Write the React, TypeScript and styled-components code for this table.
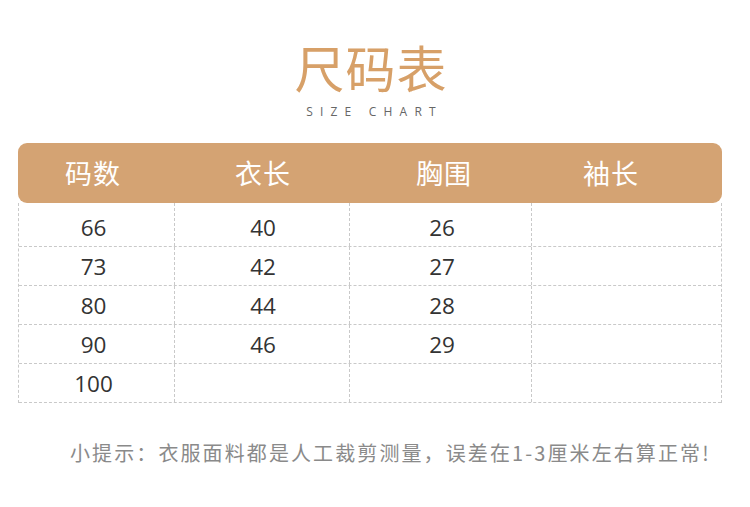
import React from "react";
import styled, { createGlobalStyle } from "styled-components";

const GlobalStyle = createGlobalStyle`
  html, body {
    margin: 0;
    padding: 0;
    background: #fff;
  }
  body {
    font-family: "Noto Sans CJK SC", "Noto Sans", sans-serif;
  }
`;

const Page = styled.div`
  width: 750px;
  height: 507px;
  background: #fff;
  display: flex;
  flex-direction: column;
  align-items: center;
  padding: 36px 8px 0 0;
  box-sizing: border-box;
`;

const Title = styled.div`
  font-family: "Noto Sans CJK SC", sans-serif;
  font-size: 50px;
  line-height: 60px;
  color: #d7a068;
  letter-spacing: 1px;
`;

const SubTitle = styled.div`
  font-family: "Open Sans", "Liberation Sans", sans-serif;
  font-size: 12px;
  letter-spacing: 7.2px;
  color: #666;
  margin-top: 7px;
  padding-left: 7px;
`;

const Table = styled.div`
  width: 704px;
  margin-top: 23px;
  align-self: flex-start;
  margin-left: 18px;
`;

const HeaderBar = styled.div`
  height: 60px;
  background: #d4a373;
  border-radius: 9px;
  display: grid;
  grid-template-columns: 150px 190px 172px 162px 1fr;
  align-items: center;
`;

const HeadCell = styled.div`
  text-align: center;
  color: #fff;
  font-size: 27px;
  letter-spacing: 1px;
  padding-bottom: 2px;
`;

const Body = styled.div`
  border-left: 1px dashed #c9c9c9;
  border-right: 1px dashed #c9c9c9;
`;

const Row = styled.div<{ $first?: boolean }>`
  display: grid;
  grid-template-columns: 156px 175px 182px 1fr;
  height: ${(p) => (p.$first ? 44 : 39)}px;
  border-bottom: 1px dashed #c9c9c9;
  box-sizing: border-box;
`;

const Cell = styled.div<{ $first?: boolean }>`
  display: flex;
  align-items: center;
  justify-content: center;
  padding-top: ${(p) => (p.$first ? 5 : 0)}px;
  border-right: 1px dashed #c9c9c9;
  font-family: "Open Sans", "Noto Sans", sans-serif;
  font-size: 22.5px;
  color: #333;
  &:last-child {
    border-right: none;
  }
  &:first-child {
    padding-right: 6px;
  }
  &:nth-child(2) {
    padding-left: 2px;
  }
  &:nth-child(3) {
    padding-left: 3px;
  }
`;

const Tip = styled.div`
  margin-top: 35px;
  width: 100%;
  padding-left: 70px;
  box-sizing: border-box;
  font-size: 20px;
  letter-spacing: 2.1px;
  color: #8a8a8a;
  white-space: nowrap;
`;

const headers = ["码数", "衣长", "胸围", "袖长"];

const rows: string[][] = [
  ["66", "40", "26", ""],
  ["73", "42", "27", ""],
  ["80", "44", "28", ""],
  ["90", "46", "29", ""],
  ["100", "", "", ""],
];

export default function App() {
  return (
    <>
      <GlobalStyle />
      <Page>
        <Title>尺码表</Title>
        <SubTitle>SIZE CHART</SubTitle>
        <Table>
          <HeaderBar>
            {headers.map((h) => (
              <HeadCell key={h}>{h}</HeadCell>
            ))}
          </HeaderBar>
          <Body>
            {rows.map((r, i) => (
              <Row key={i} $first={i === 0}>
                {r.map((c, j) => (
                  <Cell key={j} $first={i === 0}>
                    {c}
                  </Cell>
                ))}
              </Row>
            ))}
          </Body>
        </Table>
        <Tip>小提示：衣服面料都是人工裁剪测量，误差在1-3厘米左右算正常!</Tip>
      </Page>
    </>
  );
}
